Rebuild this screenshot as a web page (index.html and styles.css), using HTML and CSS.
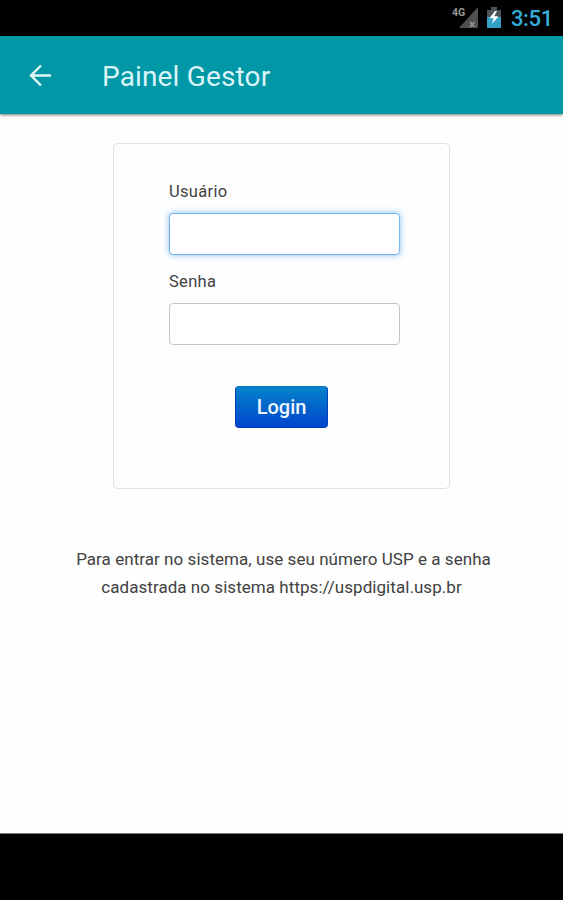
FILE: index.html
```html
<!DOCTYPE html>
<html lang="pt-BR">
<head>
	<meta charset="utf-8">
	<meta name="viewport" content="width=device-width, initial-scale=1">
	<title>Painel Gestor</title>
	<link rel="stylesheet" href="styles.css">
</head>

<body>
	<div class="status-bar">
		<svg class="signal" width="28" height="24" viewBox="0 0 28 24">
			<path d="M27 1V22H8Z" fill="#505050"/>
			<path d="M19 16l4.500 5M23.500 16l-4.500 5" stroke="#a0a0a0" stroke-width="1.200"/>
			<text x="1" y="10" class="network">4G</text>
		</svg>
		<svg class="battery" width="16" height="22" viewBox="0 0 16 22">
			<path d="M1 3h4V0h6v3h4v8H1z" fill="#4c5357"/>
			<path d="M1 10h14v11H1z" fill="#329fc4"/>
			<path d="M9 4L3.500 11l4 .500L6 17l6.500-7.500-4-.500L11 4z" fill="#f4fbfd"/>
		</svg>
		<span class="clock">3:51</span>
	</div>

	<header class="toolbar">
		<svg class="back" width="24" height="24" viewBox="0 0 24 24">
			<path d="M23 12.500H2.500M13 2.500L3 12.500l10 10" fill="none" stroke="#e3f7f8" stroke-width="2.400"/>
		</svg>
		<h1>Painel Gestor</h1>
	</header>

	<main class="content">
		<form class="login-box">
			<label for="usuario">Usuário</label>
			<input type="text" id="usuario" class="field active">
			<label for="senha">Senha</label>
			<input type="password" id="senha" class="field">
			<button type="button" class="login-button">Login</button>
		</form>
		<p class="help">Para entrar no sistema, use seu número USP e a senha<br><span class="help-line">cadastrada no sistema https://uspdigital.usp.br</span></p>
	</main>

	<div class="nav-bar"></div>
</body>
</html>
```

FILE: styles.css
```css
* {
  box-sizing: border-box;
}

body {
  margin: 0;
  height: 100vh;
  display: flex;
  flex-direction: column;
  background: #fefefe;
  font-family: Roboto, sans-serif;
  color: #414141;
  overflow: hidden;
}

.status-bar {
  height: 36px;
  flex: none;
  display: flex;
  justify-content: flex-end;
  align-items: center;
  padding-right: 10px;
  background: #000;
}

.signal {
  margin-right: 7px;
}

.network {
  font: bold 10.5px Roboto, sans-serif;
  fill: #959595;
}

.battery {
  margin-right: 9px;
}

.clock {
  font-size: 22px;
  font-weight: 500;
  line-height: 36px;
  letter-spacing: -0.3px;
  color: #35acd8;
  padding-top: 1px;
}

.toolbar {
  height: 78px;
  flex: none;
  display: flex;
  align-items: center;
  padding-left: 28px;
  background: #0097a7;
  box-shadow: 0 1px 3px rgba(0, 0, 0, 0.55);
}

.toolbar h1 {
  margin: 3px 0 0 50px;
  font-size: 28px;
  font-weight: normal;
  line-height: 34px;
  letter-spacing: 0.15px;
  color: #d9f5f7;
}

.content {
  flex: 1;
  display: flex;
  flex-direction: column;
  align-items: center;
  padding-top: 29px;
}

.login-box {
  width: 337px;
  height: 346px;
  display: flex;
  flex-direction: column;
  padding: 38px 50px 0 55px;
  border: 1px solid #e0e0e0;
  border-radius: 5px;
}

.login-box label {
  font-size: 16.5px;
  line-height: 20px;
  letter-spacing: 0.3px;
}

.field {
  width: 231px;
  height: 42px;
  margin: 11px 0 17px;
  padding: 0 8px;
  border: 1px solid #c4c4c4;
  border-radius: 4px;
  background: #fff;
  outline: none;
}

.field.active {
  border-color: #75b4ec;
  box-shadow: 0 0 6px rgba(82, 168, 236, 0.75);
}

.login-button {
  width: 93px;
  height: 42px;
  margin: 24px 0 0 66px;
  padding: 0;
  border: 1px solid #0040b8;
  border-top-color: #0874bd;
  border-radius: 4px;
  background: linear-gradient(#0484cb, #0044cc);
  color: #eef6ff;
  font-family: Roboto, sans-serif;
  font-size: 20px;
  font-weight: 500;
}

.help {
  margin: 56px 0 0;
  padding-left: 4px;
  font-size: 17px;
  line-height: 28px;
  letter-spacing: 0.05px;
  text-align: center;
  white-space: nowrap;
}

.help-line {
  margin-right: 4px;
}

.nav-bar {
  height: 67px;
  flex: none;
  border-top: 1px solid #777;
  background: #000;
}
```
